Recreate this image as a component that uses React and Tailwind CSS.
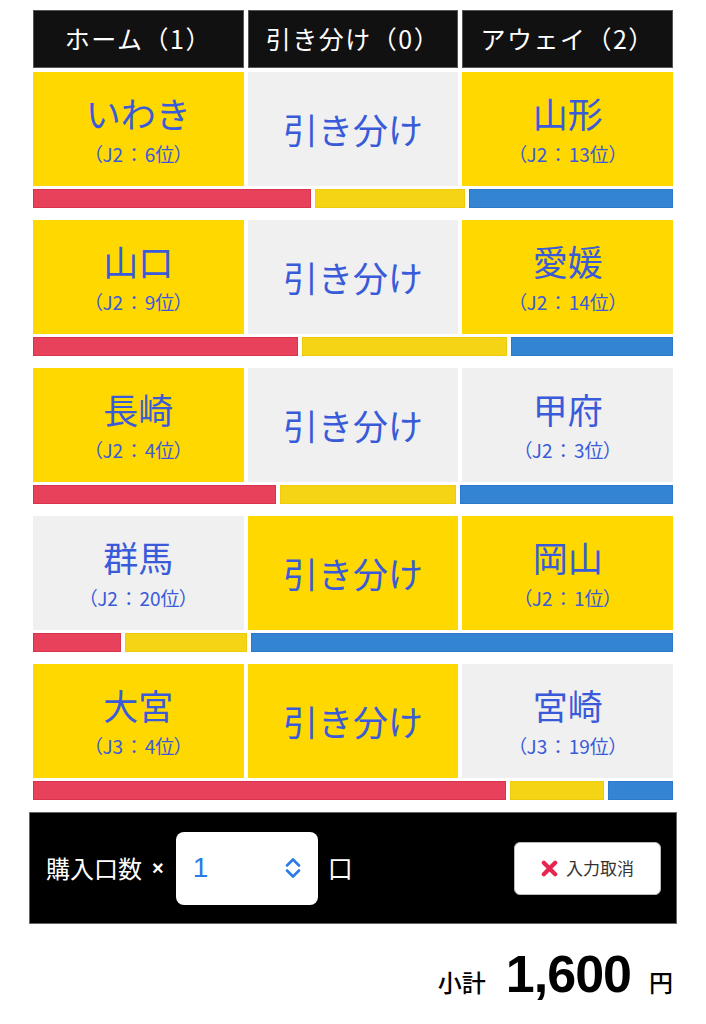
import React from 'react';

const rows = [
  { home: 'いわき', homeRank: ['J2', '6位'], away: '山形', awayRank: ['J2', '13位'], pick: 'home-away', bars: [278, 149, 204] },
  { home: '山口', homeRank: ['J2', '9位'], away: '愛媛', awayRank: ['J2', '14位'], pick: 'home-away', bars: [265, 205, 161] },
  { home: '長崎', homeRank: ['J2', '4位'], away: '甲府', awayRank: ['J2', '3位'], pick: 'home', bars: [243, 175, 213] },
  { home: '群馬', homeRank: ['J2', '20位'], away: '岡山', awayRank: ['J2', '1位'], pick: 'draw-away', bars: [87, 121, 423] },
  { home: '大宮', homeRank: ['J3', '4位'], away: '宮崎', awayRank: ['J3', '19位'], pick: 'home-draw', bars: [475, 92, 64] },
];

const font = { fontFamily: '"Noto Sans CJK JP", "Noto Sans", sans-serif' };
const palt = { fontFeatureSettings: '"palt"' };

const Cell = ({ on, children }) => (
  <div className={`flex h-[114px] flex-col items-center justify-center ${on ? 'bg-[#ffd800]' : 'bg-[#f0f0f0]'}`}>
    {children}
  </div>
);

const Team = ({ name, rank }) => (
  <>
    <div className="text-[35px] leading-[42px] text-[#3a5bd9]">{name}</div>
    <div className="mt-[7px] text-[19px] leading-[26px] text-[#3a5bd9]" style={palt}>
      <span className="pl-[5px]">（</span>
      {rank[0]}
      <span className="mx-[6px]">：</span>
      {rank[1]}
      <span className="pr-[5px]">）</span>
    </div>
  </>
);

export default function App() {
  return (
    <div className="min-h-[1024px] bg-white px-[33px] pt-[10px]" style={font}>
      {/* header */}
      <div className="grid grid-cols-3 gap-1">
        {['ホーム（1）', '引き分け（0）', 'アウェイ（2）'].map((t) => (
          <div key={t} className="flex h-[58px] items-center justify-center border border-[#555] bg-[#111] text-[25px] tracking-[1.5px] text-white">
            {t}
          </div>
        ))}
      </div>

      {rows.map((r, i) => {
        const total = r.bars[0] + r.bars[1] + r.bars[2];
        return (
          <div key={i} className="mt-1">
            <div className="grid grid-cols-3 gap-1">
              <Cell on={r.pick.includes('home')}>
                <Team name={r.home} rank={r.homeRank} />
              </Cell>
              <Cell on={r.pick.includes('draw')}>
                <div className="text-[35px] text-[#3a5bd9]">引き分け</div>
              </Cell>
              <Cell on={r.pick.includes('away')}>
                <Team name={r.away} rank={r.awayRank} />
              </Cell>
            </div>
            <div className="mt-[3px] mb-[12px] flex h-[19px] gap-1">
              <div className="border border-[#d83450] bg-[#e8415c]" style={{ flexGrow: r.bars[0] / total, flexBasis: 0 }} />
              <div className="border border-[#edcc10] bg-[#f5d415]" style={{ flexGrow: r.bars[1] / total, flexBasis: 0 }} />
              <div className="border border-[#2e78c8] bg-[#3484d4]" style={{ flexGrow: r.bars[2] / total, flexBasis: 0 }} />
            </div>
          </div>
        );
      })}

      {/* purchase panel */}
      <div className="-mx-1 mt-[5px] flex h-[112px] items-center border border-[#666] bg-black pl-[16px] pr-[15px]">
        <span className="text-[24px] text-white">購入口数</span>
        <span className="ml-[10px] text-[20px] font-bold text-white" style={{ fontFamily: '"Liberation Sans", sans-serif' }}>×</span>
        <div className="ml-[12px] flex h-[73px] w-[142px] items-center justify-between rounded-lg bg-white pl-[17px] pr-[16px]">
          <span className="text-[28px] text-[#2a7be6]" style={{ fontFamily: '"Liberation Sans", sans-serif' }}>1</span>
          <svg width="18" height="24" viewBox="0 0 18 24" fill="none" stroke="#2a7be6" strokeWidth="2.6" strokeLinecap="round" strokeLinejoin="round">
            <path d="M3 9.5 L9 3.5 L15 9.5" />
            <path d="M3 14.5 L9 20.5 L15 14.5" />
          </svg>
        </div>
        <span className="ml-[10px] text-[25px] text-white">口</span>
        <button className="ml-auto flex h-[53px] w-[147px] items-center justify-center gap-[8px] rounded-md border border-[#bbb] bg-white text-[17px] text-[#333]">
          <svg width="17" height="17" viewBox="0 0 18 18">
            <path d="M3 3 L15 15 M15 3 L3 15" stroke="#e8254f" strokeWidth="4.5" strokeLinecap="round" />
          </svg>
          入力取消
        </button>
      </div>

      {/* subtotal */}
      <div className="mt-[24px] flex items-baseline justify-end">
        <span className="text-[24px] font-medium text-black">小計</span>
        <span className="ml-[20px] text-[52px] font-bold leading-none text-black" style={{ fontFamily: '"Liberation Sans", sans-serif', letterSpacing: '-1px' }}>1,600</span>
        <span className="ml-[18px] text-[24px] font-medium text-black">円</span>
      </div>
    </div>
  );
}
